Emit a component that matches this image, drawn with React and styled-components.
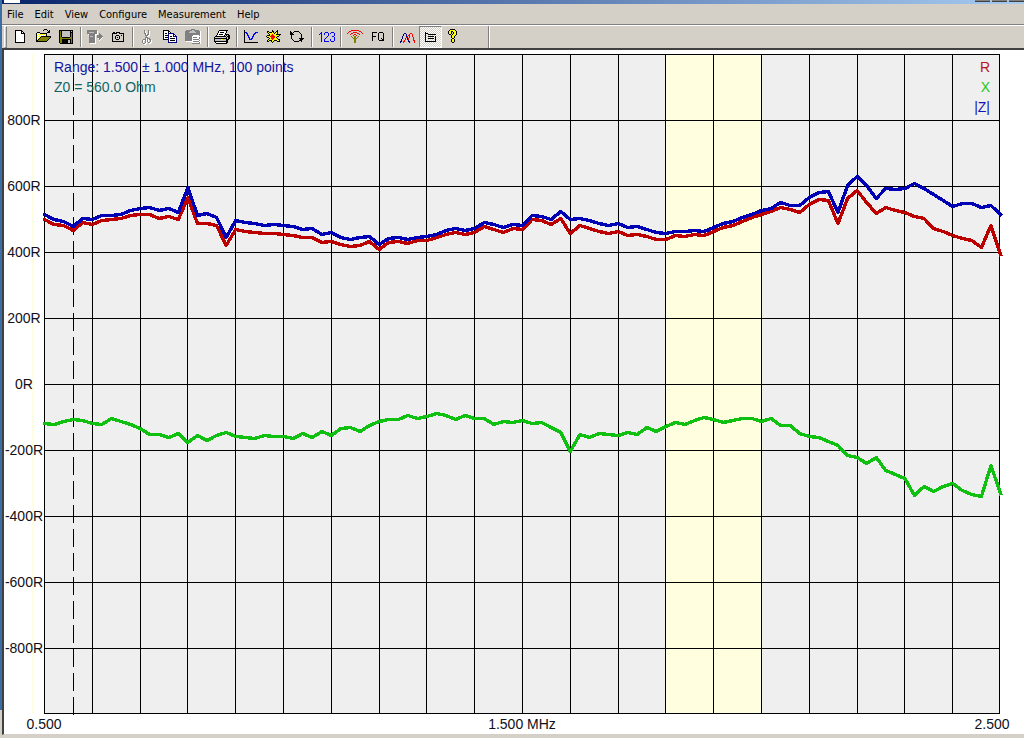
import React, { useState } from 'react'
import styled, { createGlobalStyle } from 'styled-components'

const GlobalStyle = createGlobalStyle`
  * {
    box-sizing: border-box;
  }

  body {
    margin: 0;
    background: #d4d0c8;
    font-family: "DejaVu Sans Condensed", "DejaVu Sans", sans-serif;
    font-size: 11px;
    color: #000;
  }
`

const Desktop = styled.div`
  padding-left: 2px;
  background: linear-gradient(#3a6ea5, #3a6ea5) 0 0 / 2px 710px no-repeat #d4d0c8;
`

const AppWindow = styled.main`
  display: flex;
  flex-direction: column;
  padding-bottom: 3px;
  background: #d4d0c8;
`

const TitleBar = styled.header`
  display: flex;
  justify-content: space-between;
  height: 4px;
  padding: 0 0 2px 2px;
  background: linear-gradient(to right, #0a246a, #a6caf0);
`

const TitleIcon = styled.span`
  width: 16px;
  height: 3px;
  background: #fff;
`

const TitleButtons = styled.span`
  display: flex;
  gap: 2px;
`

const TitleButton = styled.span`
  width: 15px;
  height: 2px;
  background: #808080;
  border-bottom: 1px solid #404040;
`

const MenuBar = styled.nav`
  display: flex;
  height: 21px;
  border-bottom: 1px solid #808080;
`

const MenuButton = styled.button`
  padding: 0 6px 0 5px;
  border: 0;
  background: none;
  font: inherit;
  color: inherit;
`

const ToolBar = styled.div`
  display: flex;
  height: 25px;
  padding-left: 2px;
  border-top: 1px solid #fff;
  border-bottom: 2px solid #404040;
`

const Grip = styled.span`
  width: 3px;
  margin-right: 2px;
  border: 1px solid;
  border-color: #fff #808080 #808080 #fff;
`

const Divider = styled.span`
  width: 2px;
  margin: 1px 2px;
  border-left: 1px solid #808080;
  border-right: 1px solid #fff;
`

const BarEnd = styled(Divider)`
  margin: 0 0 0 23px;
`

const ToolButton = styled.button`
  display: flex;
  align-items: flex-start;
  width: 23px;
  height: 22px;
  padding: 2px;
  border: 1px solid;
  border-color: ${({ $on }) => ($on ? '#808080 #fff #fff #808080' : 'transparent')};
  background: ${({ $on }) => ($on ? 'repeating-conic-gradient(#fff 0 25%, #d4d0c8 0 50%) 0 0 / 2px 2px' : 'none')};
`

const ChartPane = styled.section`
  border-left: 2px solid #404040;
  border-bottom: 1px solid #d4d0c8;
  background: #fff;
`

const ChartSvg = styled.svg`
  display: block;
  width: 100%;
  height: auto;
  font-family: "Liberation Sans", Arial, sans-serif;
  font-size: 14px;
`

const Trace = styled.polyline`
  fill: none;
  stroke: ${({ $color }) => $color};
  stroke-width: 3.4;
  stroke-linejoin: round;
  stroke-linecap: square;
  shape-rendering: crispEdges;
`

const palette = {
  k: '#000000',
  w: '#ffffff',
  g: '#808080',
  o: '#808000',
  y: '#ffff00',
  l: '#c0c0c0',
  b: '#0000ff',
  n: '#000080',
  r: '#ff0000',
}

// 16px wide bitmaps, one letter per pixel
const icons = {
  new: [
    '',
    '...kkkkkkk',
    '...kwwwwwkk',
    '...kwwwwwkwk',
    '...kwwwwwkkkk',
    '...kwwwwwwwwk',
    '...kwwwwwwwwk',
    '...kwwwwwwwwk',
    '...kwwwwwwwwk',
    '...kwwwwwwwwk',
    '...kwwwwwwwwk',
    '...kwwwwwwwwk',
    '...kwwwwwwwwk',
    '...kkkkkkkkkk',
  ],
  open: [
    '.........kkk',
    '........k...k.k',
    '.............kk',
    '..kkk.......kkk',
    '.kywykkkkkkk',
    '.kwywywywywk',
    '.kywywywywyk',
    '.kwywykkkkkkkkkk',
    '.kywykoooooooook',
    '.kwykoooooooook',
    '.kykoooooooook',
    '.kkoooooooook',
    '.kkkkkkkkkkk',
  ],
  save: [
    '',
    '.kkkkkkkkkkkkkk',
    '.kokllllllllklk',
    '.kokllllllllkkk',
    '.kokllllllllkok',
    '.kokllllllllkok',
    '.kokllllllllkok',
    '.kokllllllllkok',
    '.kookkkkkkkkook',
    '.kooooooooooook',
    '.kookkkkkkkkkok',
    '.kookkkkkkllkok',
    '.kookkkkkkllkok',
    '.kookkkkkkllkok',
    '..kkkkkkkkkkkkk',
  ],
  transfer: [
    '',
    'gggggggggg',
    'ggggggggggw',
    'gglllllgggw',
    'ggggggggggw.g',
    '.wggggggwww.gg',
    '..ggggggw.ggggg',
    '..glllggw.gggggg',
    '..ggggggw.gggggw',
    '..ggggggw..wggw',
    '..ggggggw...gw',
    '..ggggggw...w',
    '..ggggggw',
    '..ggggggw',
    '...wwwwww',
  ],
  camera: [
    '',
    '',
    '',
    '...kk.kkkk',
    '..kkkkk..kkkkk',
    '..k..........k',
    '..k...kkk..k.k',
    '..k..k...k...k',
    '..k..k.k.k...k',
    '..k..k...k...k',
    '..k...kkk....k',
    '..k..........k',
    '..kkkkkkkkkkkk',
  ],
  cut: [
    '',
    '.....g...g',
    '.....gw..gw',
    '.....gw..gw',
    '.....ggw.gw',
    '......gwggw',
    '......gggww',
    '.......gww',
    '......ggg',
    '......gwggg',
    '....gggwgwgg',
    '...gwwgwgw.gw',
    '...gw.gwgw.gw',
    '...gw.gw.ggww',
    '....ggww..ww',
    '.....ww',
  ],
  copy: [
    '',
    '.kkkkkk',
    '.kwwwwkk',
    '.kwwwwkwk',
    '.kwkkwnnnnnn',
    '.kwwwwnwwwwnn',
    '.kwkkknwwwwnwn',
    '.kwwwwnwkkwnnnn',
    '.kwkkknwwwwwwwn',
    '.kwwwwnwkkkkkwn',
    '.kkkkknwwwwwwwn',
    '......nwkkkkkwn',
    '......nwwwwwwwn',
    '......nnnnnnnnn',
  ],
  paste: [
    '......gggg',
    '.ggggggllggggg',
    'ggggglllllgggggw',
    'gggglllllllggggw',
    'gggggggggggggggw',
    'gggggggggggggggw',
    'ggggggggwwwwwwgw',
    'gggggggwwwwwwwww',
    'gggggggwggggwwgw',
    'gggggggwwwwwwwgw',
    'gggggggwggggggww',
    'gggggggwwwwwwwgw',
    '.wwwwwwwggggggww',
    '.......wwwwwwwgw',
    '.......ggggggggw',
  ],
  print: [
    '',
    '.....kkkkkkkkk',
    '....kwwwwwwwk',
    '....kwkkkkwwk',
    '...kwwwwwwwk',
    '...kwkkkkwwkkkk',
    '..kwwwwwwwk.k.kk',
    '.kkkkkkkkkkk.kkk',
    'k...........k.kk',
    'kkkkkkkkkkkkk.kk',
    'kllllllyylllkkk',
    'klllllllllllkk',
    'kkkkkkkkkkkkkk',
    '.kwwwwwwwwwwkk',
    '..kkkkkkkkkkk',
  ],
  graph: [
    '',
    '.k',
    '.k',
    '.kbb........bbb',
    '.k.bb......bb',
    '.k..b.....bb',
    '.k..bb....b',
    '.k...b...bb',
    '.k...bb..b',
    '.k....b.bb',
    '.k....bbb',
    '.k',
    '.k',
    '.kkkkkkkkkkkkkk',
  ],
  burst: [
    '',
    '......k....k',
    '.kk...kk..kk',
    '.kykkkyk.kyk',
    '..kyyyyykyyk',
    '...kyyryyykkkkk',
    '.kkkyrrryyyyyk',
    'kyyyrrrrryykk',
    '.kkyyrrrryk',
    '...kyrrryyyk',
    '..kyyyryyyyykk',
    '.kykkkyykkkyyk',
    '.kk..kyk...kkk',
    '......k',
  ],
  cycle: [
    '',
    '',
    '.k...kkkkk',
    '.kk.k.....k',
    '.kkk.......k',
    '.kkkk.......k',
    '..k.........k',
    '..k.........k',
    '..k.........k',
    '..k.......kkkkk',
    '...k.......kkk',
    '....k.....kkk',
    '.....kkkkk..k',
  ],
  digits: [
    '',
    '',
    '',
    '...b...bbb...bbb',
    '..bb..b...b.b...b',
    '.b.b..b...b.....b',
    '...b......b.....b',
    '...b.....b....bb',
    '...b....b.......b',
    '...b...b........b',
    '...b..b.....b...b',
    '...b..b.....b...b',
    '...b..bbbbb..bbb',
  ],
  antenna: [
    '',
    '....rrrrrrrr',
    '..rr........rr',
    '.r....rrrr....r',
    'r...rr....rr...r',
    '...r...rr...r',
    '......r..r',
    '....o..oo..o',
    '.....o.oo.o',
    '......oooo',
    '.......oo',
    '.......oo',
    '.......oo',
    '.......oo',
  ],
  fq: [
    '',
    '',
    '',
    '..kkkkk..kkkk',
    '..k.....k....k',
    '..k.....k....k',
    '..k.....k....k',
    '..kkkk..k....k',
    '..k.....k....k',
    '..k.....k..k.k',
    '..k.....k...kk',
    '..k......kkkkk',
  ],
  waves: [
    '',
    '',
    '',
    '',
    '.....nn....rr',
    '....n..n..r..r',
    '....n..n.rr..r',
    '...n...nr.r..r',
    '...n...rn.r...r',
    '...n..r.nr....r',
    '..n...r.nr....r',
    '..n..r...n....rr',
    '.nn.rr...nn....r',
    '.n..r.....n....r',
  ],
  notes: [
    '',
    '',
    '',
    '...k',
    '...kkk',
    '...k..kkkkkkkk',
    '...k',
    '...k..kkkkkk.k',
    '...k.........k',
    '...k..kkkkkk.k',
    '...k.........k',
    '...k.........k',
    '...kkkkkkkkkkk',
  ],
  help: [
    '.....kkkkk',
    '....kyyyyyk',
    '...kyykkyyyk',
    '...kyyk.kyyk',
    '...kyyk.kyyk',
    '....kk.kyyyk',
    '......kyyyk',
    '......kyyk',
    '......kyyk',
    '.......kk',
    '......kyyk',
    '......kyyk',
    '......kyyk',
    '.......kk',
  ],
}

const menus = ['File', 'Edit', 'View', 'Configure', 'Measurement', 'Help']

const toolGroups = [
  [['new', 'New'], ['open', 'Open'], ['save', 'Save']],
  [['transfer', 'Transfer'], ['camera', 'Snapshot']],
  [['cut', 'Cut'], ['copy', 'Copy'], ['paste', 'Paste']],
  [['print', 'Print']],
  [['graph', 'Graph'], ['burst', 'Single scan'], ['cycle', 'Repeat scan']],
  [['digits', 'Values']],
  [['antenna', 'Antenna'], ['fq', 'Frequency']],
  [['waves', 'Traces'], ['notes', 'Legend'], ['help', 'Help']],
]

// plot area inside the chart's own coordinates
const plot = { left: 44, top: 54, right: 999, bottom: 713, column: 47.8, row: 66 }

const traces = [
  {
    name: 'X',
    color: '#10c010',
    points: [
      423, 424, 421, 419, 420, 423, 424, 418, 421, 424, 428, 434, 434, 437, 433, 442, 435, 440, 435, 432,
      436, 437, 438, 435, 436, 436, 438, 433, 437, 431, 435, 428, 427, 431, 425, 421, 419, 419, 415, 418,
      416, 413, 415, 419, 415, 418, 418, 424, 421, 422, 420, 423, 422, 427, 432, 451, 434, 437, 433, 434,
      435, 432, 434, 427, 431, 426, 422, 424, 420, 417, 419, 422, 420, 418, 418, 421, 418, 425, 425, 433,
      436, 437, 441, 445, 455, 457, 463, 457, 470, 474, 478, 495, 486, 491, 486, 483, 490, 494, 496, 465,
      493,
    ],
  },
  {
    name: 'R',
    color: '#bc0000',
    points: [
      219, 224, 225, 230, 222, 224, 220, 219, 218, 215, 214, 214, 218, 216, 219, 197, 223, 223, 225, 245,
      229, 231, 232, 233, 233, 234, 235, 237, 237, 242, 241, 244, 246, 245, 241, 249, 242, 241, 243, 240,
      240, 237, 234, 232, 234, 232, 226, 229, 232, 228, 229, 219, 220, 224, 218, 233, 225, 228, 231, 233,
      231, 235, 234, 236, 239, 239, 235, 236, 234, 235, 231, 227, 225, 221, 217, 214, 211, 207, 209, 212,
      204, 199, 200, 223, 198, 190, 202, 213, 207, 210, 212, 216, 218, 228, 231, 235, 238, 240, 247, 225,
      254,
    ],
  },
  {
    name: '|Z|',
    color: '#0000b4',
    points: [
      214, 219, 221, 226, 218, 219, 215, 215, 214, 210, 208, 207, 210, 208, 212, 187, 215, 213, 217, 237,
      220, 222, 223, 225, 224, 225, 226, 229, 228, 234, 232, 237, 239, 237, 236, 244, 238, 237, 239, 237,
      236, 234, 230, 228, 230, 228, 222, 224, 227, 224, 225, 215, 216, 219, 211, 219, 218, 220, 223, 225,
      223, 227, 226, 229, 232, 233, 231, 231, 230, 231, 227, 223, 221, 217, 214, 210, 208, 202, 205, 205,
      197, 192, 191, 212, 185, 176, 185, 198, 188, 189, 188, 183, 188, 194, 200, 206, 203, 203, 207, 205,
      214,
    ],
  },
]

const legend = [
  { name: 'R', color: '#b81414' },
  { name: 'X', color: '#20c820' },
  { name: '|Z|', color: '#1414b4' },
]

function PixelIcon({ rows }) {
  return (
    <svg width="17" height="16" viewBox="0 0 17 16" shapeRendering="crispEdges" aria-hidden="true">
      {rows.map((row, y) => [...row].map((c, x) => (
        palette[c] && <rect key={`${x}-${y}`} x={x} y={y} width="1" height="1" fill={palette[c]}/>
      )))}
    </svg>
  )
}

function toPoints(points) {
  return points.map((y, i) => `${(plot.left + 0.5 + i * plot.column / 5).toFixed(2)},${y + 0.5}`).join(' ')
}

function Grid() {
  const xs = Array.from({ length: 21 }, (_, i) => Math.min(Math.round(plot.left + i * plot.column), plot.right))
  const ys = Array.from({ length: 11 }, (_, i) => Math.min(plot.top + i * plot.row, plot.bottom))

  return (
    <g fill="#000" shapeRendering="crispEdges">
      {xs.map(x => <rect key={x} x={x} y={plot.top} width="1" height={plot.bottom - plot.top + 1}/>)}
      {ys.map(y => <rect key={y} x={plot.left} y={y} width={plot.right - plot.left + 1} height="1"/>)}
    </g>
  )
}

function Chart() {
  const height = plot.bottom - plot.top

  return (
    <ChartSvg viewBox="4 50 1020 684" role="img" aria-label="Impedance against frequency">
      <rect x="32" y={plot.top} width="2" height={height} fill="#ffffdf"/>
      <rect x={plot.left} y={plot.top} width={plot.right - plot.left} height={height} fill="#efefef"/>
      <rect x="666" y={plot.top} width="95" height={height} fill="#ffffdf"/>
      <Grid/>
      <line x1="73.5" y1="55" x2="73.5" y2="715" stroke="#000" strokeDasharray="18 6" strokeDashoffset="6" shapeRendering="crispEdges"/>

      {traces.map(trace => (
        <Trace key={trace.name} $color={trace.color} points={toPoints(trace.points)}/>
      ))}

      <text x="54" y="72" fill="#1414a0">Range: 1.500 ± 1.000 MHz, 100 points</text>
      <text x="54" y="92" fill="#146464">Z0 = 560.0 Ohm</text>
      {legend.map((item, i) => (
        <text key={item.name} x="990" y={72 + i * 20} textAnchor="end" fill={item.color}>{item.name}</text>
      ))}

      <g textAnchor="middle" fill="#101020">
        {[800, 600, 400, 200, 0, -200, -400, -600, -800].map((ohms, i) => (
          <text key={ohms} x="24" y={125 + i * plot.row}>{ohms}R</text>
        ))}
        <text x="44" y="729">0.500</text>
        <text x="522" y="729">1.500 MHz</text>
        <text x="992" y="729">2.500</text>
      </g>
    </ChartSvg>
  )
}

function App() {
  const [showNotes, setShowNotes] = useState(true)

  return (
    <>
      <GlobalStyle/>
      <Desktop>
        <AppWindow>
          <TitleBar>
            <TitleIcon/>
            <TitleButtons>
              <TitleButton/>
              <TitleButton/>
              <TitleButton/>
            </TitleButtons>
          </TitleBar>

          <MenuBar>
            {menus.map(menu => <MenuButton key={menu} type="button">{menu}</MenuButton>)}
          </MenuBar>

          <ToolBar role="toolbar" aria-label="Standard">
            <Grip/>
            {toolGroups.map((group, i) => (
              <React.Fragment key={group[0][0]}>
                { i > 0 && <Divider/> }
                {group.map(([icon, label]) => (
                  <ToolButton
                    key={icon}
                    type="button"
                    aria-label={label}
                    $on={icon === 'notes' && showNotes}
                    onClick={icon === 'notes' ? () => setShowNotes(!showNotes) : undefined}
                  >
                    <PixelIcon rows={icons[icon]}/>
                  </ToolButton>
                ))}
              </React.Fragment>
            ))}
            <BarEnd/>
          </ToolBar>

          <ChartPane>
            <Chart/>
          </ChartPane>
        </AppWindow>
      </Desktop>
    </>
  )
}

export default App
